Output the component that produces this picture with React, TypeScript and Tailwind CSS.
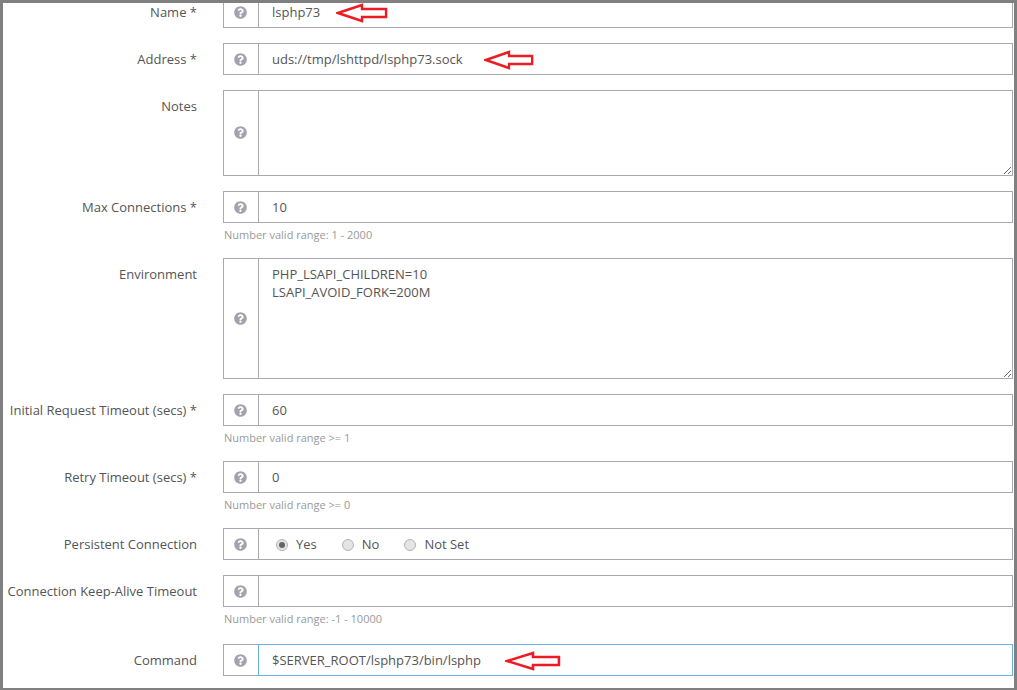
import React from 'react';
import { FaQuestionCircle } from 'react-icons/fa';

// Hand drawn red annotation arrow, tip on the left
function Arrow({ className, width }: { className: string; width: number }) {
  return (
    <svg
      width={width}
      height="20"
      viewBox="0 0 54 20"
      preserveAspectRatio="none"
      className={`shrink-0 -mb-[1px] ${className}`}
    >
      <path
        d="M2 10 L27 2 L27 6 L52 6 L52 14 L27 14 L27 18 Z"
        fill="none"
        stroke="#ed1c24"
        strokeWidth="2.5"
      />
    </svg>
  );
}

function Addon({ lift }: { lift?: boolean }) {
  return (
    <div className="w-[35px] shrink-0 flex items-center justify-center pr-[2px] border border-r-0 border-[#aaa8b0] text-[#a3a3ad]">
      <FaQuestionCircle size={13} className={lift ? '-mt-[1px]' : ''} />
    </div>
  );
}

function Row({
  label,
  hint,
  focused,
  children,
  hintClass = 'h-[35px]',
}: {
  label: string;
  hint?: string;
  focused?: boolean;
  children?: React.ReactNode;
  hintClass?: string;
}) {
  return (
    <div className={hint ? 'flex' : 'flex mb-[15px]'}>
      <div className="w-[194px] shrink-0 h-[32px] pt-[2px] flex items-center justify-end text-right whitespace-nowrap">
        {label}
      </div>
      <div className="ml-[26px] w-[790px] shrink-0">
        <div className="flex h-[32px]">
          <Addon />
          <div
            className={`flex-1 min-w-0 flex items-center pl-[13px] pt-[1px] border ${
              focused ? 'border-[#66afe9]' : 'border-[#aaa8b0]'
            }`}
          >
            {children}
          </div>
        </div>
        {hint && (
          <div className={`${hintClass} pt-[4px] pl-[1px] text-[11px] leading-[16px] text-[#9a9a9a]`}>
            {hint}
          </div>
        )}
      </div>
    </div>
  );
}

function AreaRow({ label, height, value }: { label: string; height: string; value: string }) {
  return (
    <div className="flex mb-[15px]">
      <div className="w-[194px] shrink-0 h-[32px] pt-[2px] flex items-center justify-end whitespace-nowrap">
        {label}
      </div>
      <div className={`ml-[26px] w-[790px] shrink-0 flex ${height}`}>
        <Addon lift />
        <textarea
          readOnly
          defaultValue={value}
          className="flex-1 min-w-0 resize-y border border-[#aaa8b0] pl-[13px] pt-[6px] leading-[18px] outline-none"
        />
      </div>
    </div>
  );
}

function Radio({ label, checked, className }: { label: string; checked?: boolean; className: string }) {
  return (
    <div className={`flex items-center ${className}`}>
      <span className="w-[12px] h-[12px] rounded-full border border-[#b4b4b4] bg-[#e4e4e4] flex items-center justify-center mr-[8px]">
        {checked && <span className="w-[6px] h-[6px] rounded-full bg-[#666666]" />}
      </span>
      {label}
    </div>
  );
}

export default function App() {
  return (
    <div className="w-[1017px] h-[690px] overflow-hidden bg-white border-[#808080] border-t-[3px] border-l-[3px] border-r-[3px] border-b-[2px] text-[13px] text-[#555555] font-['Open_Sans',sans-serif]">
      <div className="-mt-[7px]">
        <Row label="Name *">
          lsphp73
          <Arrow width={52} className="ml-[16px]" />
        </Row>
        <Row label="Address *">
          uds://tmp/lshttpd/lsphp73.sock
          <Arrow width={50} className="ml-[21px]" />
        </Row>
        <AreaRow label="Notes" height="h-[86px]" value="" />
        <Row label="Max Connections *" hint="Number valid range: 1 - 2000">
          10
        </Row>
        <AreaRow
          label="Environment"
          height="h-[121px]"
          value={'PHP_LSAPI_CHILDREN=10\nLSAPI_AVOID_FORK=200M'}
        />
        <Row label="Initial Request Timeout (secs) *" hint="Number valid range >= 1">
          60
        </Row>
        <Row label="Retry Timeout (secs) *" hint="Number valid range >= 0">
          0
        </Row>
        <Row label="Persistent Connection">
          <Radio label="Yes" checked className="ml-[4px]" />
          <Radio label="No" className="ml-[25px]" />
          <Radio label="Not Set" className="ml-[25px]" />
        </Row>
        <Row
          label="Connection Keep-Alive Timeout"
          hint="Number valid range: -1 - 10000"
          hintClass="h-[37px]"
        />
        <Row label="Command" focused>
          $SERVER_ROOT/lsphp73/bin/lsphp
          <Arrow width={56} className="ml-[24px]" />
        </Row>
      </div>
    </div>
  );
}
